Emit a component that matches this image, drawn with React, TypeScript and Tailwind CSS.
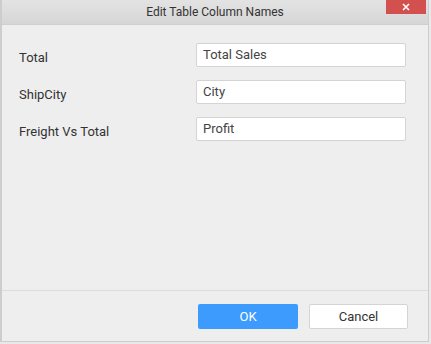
export default function App() {
  const rows = [
    { label: 'Total', value: 'Total Sales' },
    { label: 'ShipCity', value: 'City' },
    { label: 'Freight Vs Total', value: 'Profit' },
  ];

  return (
    <div className="h-[344px] w-[431px] bg-[#e9e9e9] font-['Roboto',sans-serif]">
      <div className="flex h-[342px] w-[429px] flex-col border-l-2 border-r border-b border-[#cdcdcd] bg-[#eeeeee]">
        <div className="relative flex h-[25px] shrink-0 items-center justify-center border-b border-[#cfcfcf] bg-gradient-to-b from-[#e3e3e3] to-[#d6d6d6]">
          <span className="text-[12px] text-[#333333]">Edit Table Column Names</span>
          <button className="absolute right-[2px] top-0 flex h-[14px] w-[40px] items-center justify-center bg-[#d2504e] text-white">
            <svg width="8" height="8" viewBox="0 0 8 8">
              <path d="M1 1L7 7M7 1L1 7" stroke="white" strokeWidth="1.6" />
            </svg>
          </button>
        </div>
        <div className="flex flex-1 flex-col gap-[13px] pl-[17px] pr-[22px] pt-[18px]">
          {rows.map((r) => (
            <div key={r.label} className="flex h-[24px] items-start justify-between">
              <span className="pt-[5px] text-[13px] text-[#333333]">{r.label}</span>
              <div className="flex h-[24px] w-[210px] items-center rounded-[2px] border border-[#d4d4d4] bg-white px-[6px] text-[13px] text-[#444444]">
                {r.value}
              </div>
            </div>
          ))}
        </div>
        <div className="flex h-[51px] shrink-0 items-start justify-end gap-[11px] border-t border-[#dcdcdc] pr-[20px] pt-[13px]">
          <button className="h-[25px] w-[100px] rounded-[2px] bg-[#3d9bfd] text-[13px] text-white">OK</button>
          <button className="h-[25px] w-[99px] rounded-[2px] border border-[#d4d4d4] bg-white text-[13px] text-[#333333]">Cancel</button>
        </div>
      </div>
    </div>
  );
}
